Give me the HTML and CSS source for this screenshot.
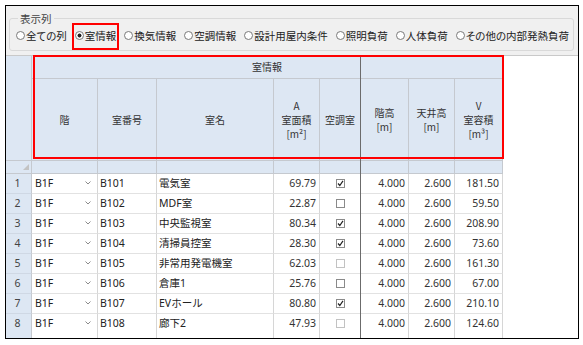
FILE: index.html
```html
<!DOCTYPE html>
<html lang="ja">
<head>
<meta charset="utf-8">
<title>表示列</title>
<link rel="stylesheet" href="styles.css">
</head>
<body>
<div class="frame">
  <div class="panel">
    <fieldset class="group">
      <legend>表示列</legend>
      <div class="radios">
        <span class="radio"><span class="dot"></span>全ての列</span>
        <span class="radio on"><span class="dot"></span>室情報</span>
        <span class="radio"><span class="dot"></span>換気情報</span>
        <span class="radio"><span class="dot"></span>空調情報</span>
        <span class="radio"><span class="dot"></span>設計用屋内条件</span>
        <span class="radio"><span class="dot"></span>照明負荷</span>
        <span class="radio"><span class="dot"></span>人体負荷</span>
        <span class="radio"><span class="dot"></span>その他の内部発熱負荷</span>
      </div>
    </fieldset>
  </div>

  <div class="grid">
    <div class="hc corner"></div>
    <div class="hc band">室情報</div>

    <div class="hc">階</div>
    <div class="hc">室番号</div>
    <div class="hc">室名</div>
    <div class="hc">A<br>室面積<br>[m²]</div>
    <div class="hc">空調室</div>
    <div class="hc">階高<br>[m]</div>
    <div class="hc">天井高<br>[m]</div>
    <div class="hc">V<br>室容積<br>[m³]</div>

    <div class="hc flt fcorner"><svg class="tri" width="6" height="6" viewBox="0 0 6 6"><polygon points="6,0 6,6 0,6" fill="#c3c3c3"/></svg></div>
    <div class="hc flt"></div><div class="hc flt"></div><div class="hc flt"></div><div class="hc flt"></div>
    <div class="hc flt"></div><div class="hc flt"></div><div class="hc flt"></div><div class="hc flt"></div>

    <div class="c rn">1</div><div class="c fl">B1F<svg class="caret" width="6" height="4" viewBox="0 0 6 4"><polyline points="0.5,0.5 3,3 5.5,0.5" fill="none" stroke="#8a8a8a" stroke-width="1"/></svg></div><div class="c tx">B101</div><div class="c tx">電気室</div><div class="c num">69.79</div><div class="c ck"><span class="box on"><svg width="7" height="7" viewBox="0 0 7 7"><polyline points="1,3.5 2.8,5.5 6,0.8" fill="none" stroke="#222" stroke-width="1.2"/></svg></span></div><div class="c num">4.000</div><div class="c num">2.600</div><div class="c num">181.50</div>

    <div class="c rn">2</div><div class="c fl">B1F<svg class="caret" width="6" height="4" viewBox="0 0 6 4"><polyline points="0.5,0.5 3,3 5.5,0.5" fill="none" stroke="#8a8a8a" stroke-width="1"/></svg></div><div class="c tx">B102</div><div class="c tx">MDF室</div><div class="c num">22.87</div><div class="c ck"><span class="box"></span></div><div class="c num">4.000</div><div class="c num">2.600</div><div class="c num">59.50</div>

    <div class="c rn">3</div><div class="c fl">B1F<svg class="caret" width="6" height="4" viewBox="0 0 6 4"><polyline points="0.5,0.5 3,3 5.5,0.5" fill="none" stroke="#8a8a8a" stroke-width="1"/></svg></div><div class="c tx">B103</div><div class="c tx">中央監視室</div><div class="c num">80.34</div><div class="c ck"><span class="box on"><svg width="7" height="7" viewBox="0 0 7 7"><polyline points="1,3.5 2.8,5.5 6,0.8" fill="none" stroke="#222" stroke-width="1.2"/></svg></span></div><div class="c num">4.000</div><div class="c num">2.600</div><div class="c num">208.90</div>

    <div class="c rn">4</div><div class="c fl">B1F<svg class="caret" width="6" height="4" viewBox="0 0 6 4"><polyline points="0.5,0.5 3,3 5.5,0.5" fill="none" stroke="#8a8a8a" stroke-width="1"/></svg></div><div class="c tx">B104</div><div class="c tx">清掃員控室</div><div class="c num">28.30</div><div class="c ck"><span class="box on"><svg width="7" height="7" viewBox="0 0 7 7"><polyline points="1,3.5 2.8,5.5 6,0.8" fill="none" stroke="#222" stroke-width="1.2"/></svg></span></div><div class="c num">4.000</div><div class="c num">2.600</div><div class="c num">73.60</div>

    <div class="c rn">5</div><div class="c fl">B1F<svg class="caret" width="6" height="4" viewBox="0 0 6 4"><polyline points="0.5,0.5 3,3 5.5,0.5" fill="none" stroke="#8a8a8a" stroke-width="1"/></svg></div><div class="c tx">B105</div><div class="c tx">非常用発電機室</div><div class="c num">62.03</div><div class="c ck"><span class="box dim"></span></div><div class="c num">4.000</div><div class="c num">2.600</div><div class="c num">161.30</div>

    <div class="c rn">6</div><div class="c fl">B1F<svg class="caret" width="6" height="4" viewBox="0 0 6 4"><polyline points="0.5,0.5 3,3 5.5,0.5" fill="none" stroke="#8a8a8a" stroke-width="1"/></svg></div><div class="c tx">B106</div><div class="c tx">倉庫1</div><div class="c num">25.76</div><div class="c ck"><span class="box"></span></div><div class="c num">4.000</div><div class="c num">2.600</div><div class="c num">67.00</div>

    <div class="c rn">7</div><div class="c fl">B1F<svg class="caret" width="6" height="4" viewBox="0 0 6 4"><polyline points="0.5,0.5 3,3 5.5,0.5" fill="none" stroke="#8a8a8a" stroke-width="1"/></svg></div><div class="c tx">B107</div><div class="c tx">EVホール</div><div class="c num">80.80</div><div class="c ck"><span class="box on"><svg width="7" height="7" viewBox="0 0 7 7"><polyline points="1,3.5 2.8,5.5 6,0.8" fill="none" stroke="#222" stroke-width="1.2"/></svg></span></div><div class="c num">4.000</div><div class="c num">2.600</div><div class="c num">210.10</div>

    <div class="c rn last">8</div><div class="c fl last">B1F<svg class="caret" width="6" height="4" viewBox="0 0 6 4"><polyline points="0.5,0.5 3,3 5.5,0.5" fill="none" stroke="#8a8a8a" stroke-width="1"/></svg></div><div class="c tx last">B108</div><div class="c tx last">廊下2</div><div class="c num last">47.93</div><div class="c ck last"><span class="box dim"></span></div><div class="c num last">4.000</div><div class="c num last">2.600</div><div class="c num last">124.60</div>

    <div class="freeze"></div>
  </div>

  <div class="mark mark-radio"></div>
  <div class="mark mark-head"></div>
</div>
</body>
</html>
```

FILE: styles.css
```css
* { box-sizing: border-box; }
html, body { margin: 0; padding: 0; background: #fff; }
body {
  font-family: "Noto Sans", "Noto Sans CJK JP", sans-serif;
  font-size: 10.5px;
  color: #222;
}

.frame {
  position: relative;
  margin: 5px 0 0 5px;
  width: 574px;
  height: 334px;
  border: 1px solid #000;
  display: flex;
  flex-direction: column;
  overflow: hidden;
}

/* top panel with group box */
.panel {
  flex: none;
  height: 49px;
  background: #f0f0f0;
  padding: 6px 4px 0 3px;
}
.group {
  margin: 0;
  height: 39px;
  min-width: 0;
  padding: 4px 0 0 6px;
  border: 1px solid #d9d9d9;
  border-radius: 3px;
}
.group legend {
  margin-left: 2px;
  padding: 0 2px;
  font-family: "Noto Sans CJK JP", sans-serif;
  font-size: 10.5px;
  line-height: 13px;
  color: #444;
}
.radios {
  display: flex;
  gap: 8px;
  white-space: nowrap;
  font-family: "Noto Sans CJK JP", sans-serif;
  font-feature-settings: "palt";
  font-size: 10.5px;
  line-height: 13px;
  color: #222;
}
.radio {
  display: flex;
  align-items: center;
  gap: 1px;
}
.dot {
  width: 9px;
  height: 9px;
  border: 1px solid #7a7a7a;
  border-radius: 50%;
  background: #fff;
}
.radio.on .dot {
  background: radial-gradient(circle, #222 0 1.7px, #fff 2.3px);
}

/* grid */
.grid {
  position: relative;
  flex: 1;
  border-top: 1px solid #c9c9c9;
  display: grid;
  grid-template-columns: 26px 66px 59px 117px 46px 41px 48px 46px 48px;
  grid-template-rows: 23px 82px 13px repeat(7, 20px) 1fr;
  align-content: stretch;
  justify-content: start;
}
.hc {
  background: #dde7f3;
  border-right: 1px solid #c5c9cf;
  border-bottom: 1px solid #c5c9cf;
  display: flex;
  align-items: center;
  justify-content: center;
  text-align: center;
  font-family: "Noto Sans CJK JP", sans-serif;
  font-size: 10px;
  line-height: 14px;
  color: #333;
}
.corner { grid-row: 1 / 3; grid-column: 1; }
.band { grid-row: 1; grid-column: 2 / 10; }
.fcorner {
  justify-content: flex-end;
  align-items: flex-end;
  padding: 0 2px 3px 0;
}
.tri { display: block; }

.c {
  border-right: 1px solid #d6d6d6;
  border-bottom: 1px solid #e2e2e2;
  display: flex;
  align-items: flex-start;
  line-height: 19px;
  white-space: nowrap;
  overflow: hidden;
  font-family: "Noto Sans", "Noto Sans CJK JP", sans-serif;
  font-size: 10.5px;
  color: #222;
}
.c.last { border-bottom: none; }
.rn {
  background: #dde7f3;
  border-right-color: #c5c9cf;
  border-bottom-color: #cfd8e4;
  justify-content: center;
  color: #444;
  padding-right: 2px;
}
.fl {
  justify-content: space-between;
  padding: 0 6px 0 3px;
}
.caret { margin-top: 7px; }
.tx { padding-left: 2px; }
.num { justify-content: flex-end; padding-right: 3px; color: #333; }
.ck { justify-content: center; padding-top: 5px; }

.box {
  width: 9px;
  height: 9px;
  border: 1px solid #8a8a8a;
  background: #fff;
  display: flex;
  align-items: center;
  justify-content: center;
}
.box.dim { border-color: #c2c2c2; }
.box svg { display: block; }

/* frozen column separator, drawn over the grid */
.freeze {
  position: absolute;
  left: 354px;
  top: 0;
  bottom: 0;
  width: 1px;
  background: #6b6b6b;
}

/* red annotation boxes */
.mark {
  position: absolute;
  border: 2px solid #f00;
}
.mark-radio { left: 66px; top: 17px; width: 47px; height: 27px; }
.mark-head { left: 27px; top: 49px; width: 471px; height: 104px; }
```
